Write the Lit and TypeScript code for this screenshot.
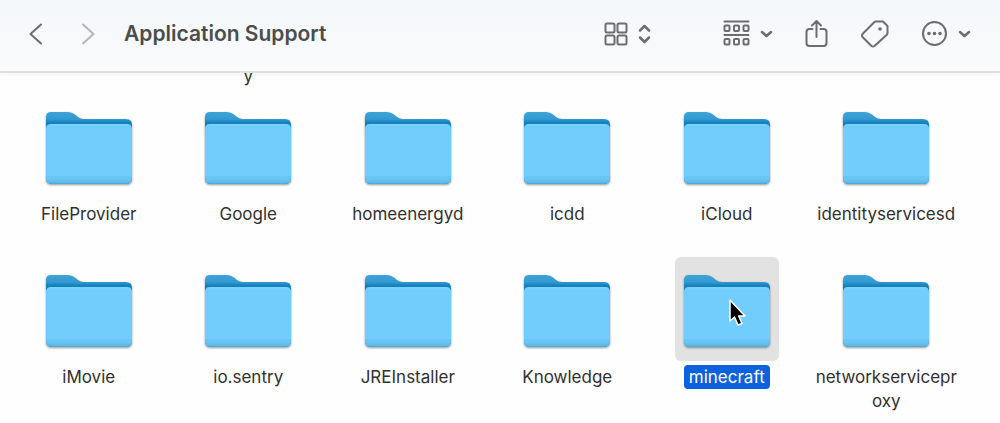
import { LitElement, html, css, svg, nothing } from "lit";
import { customElement, property, state } from "lit/decorators.js";
import { classMap } from "lit/directives/class-map.js";

const chevronDown = svg`<path d="M2 2 L6.500 6 L11 2" />`;

@customElement("folder-icon")
class FolderIcon extends LitElement {
  static styles = css`
    :host { display: block; }
    .folder { display: block; width: 90px; height: 84px; }
  `;

  render() {
    return html`
      <svg class="folder" viewBox="0 -7 90 84" aria-hidden="true">
        <defs>
          <linearGradient id="back" x1="0" y1="0" x2="0" y2="1">
            <stop offset="0" stop-color="#3fa3d8" />
            <stop offset="0.1" stop-color="#3399d0" />
            <stop offset="0.15" stop-color="#1480bd" />
            <stop offset="1" stop-color="#1480bd" />
          </linearGradient>
          <linearGradient id="front" x1="0" y1="0" x2="0" y2="1">
            <stop offset="0" stop-color="#7fd4fb" />
            <stop offset="0.04" stop-color="#71cdfb" />
            <stop offset="0.87" stop-color="#71cdfb" />
            <stop offset="0.88" stop-color="#64c0ef" />
            <stop offset="0.9" stop-color="#6cc8f7" />
            <stop offset="0.96" stop-color="#62bceb" />
            <stop offset="1" stop-color="#50a9d6" />
          </linearGradient>
          <filter id="shade" x="-10%" y="-10%" width="120%" height="120%">
            <feDropShadow dx="0" dy="1" stdDeviation="0.8" flood-color="#000" flood-opacity="0.4" />
          </filter>
        </defs>
        <g filter="url(#shade)">
          <path fill="url(#back)" d="M2 6 Q2 1 7 1 H24 Q28 1 31 3.500 L34 6 Q36.500 8 40 8 H82 Q88 8 88 14 V67 Q88 73 82 73 H8 Q2 73 2 67 Z" />
          <path fill="url(#front)" d="M2 18 Q2 13 7 13 H83 Q88 13 88 18 V67 Q88 73 82 73 H8 Q2 73 2 67 Z" />
        </g>
      </svg>
    `;
  }
}

@customElement("file-item")
class FileItem extends LitElement {
  static styles = css`
    :host { display: block; }
    .item {
      display: flex;
      flex-direction: column;
      align-items: center;
      gap: 4px;
      width: 100%;
      padding: 0;
      border: 0;
      background: none;
      font: inherit;
      font-optical-sizing: none;
      color: inherit;
    }
    .tile {
      position: relative;
      display: grid;
      place-items: center;
      width: 104px;
      height: 104px;
      border-radius: 6px;
    }
    .label {
      max-width: 152px;
      padding: 0 5px;
      border-radius: 4px;
      line-height: 24px;
      overflow-wrap: anywhere;
      text-align: center;
    }
    .selected .tile { background: #e2e2e2; }
    .selected .label { background: #0b62de; color: #fff; }
    .pointer { position: absolute; left: 53px; top: 41px; width: 20px; height: 30px; }
  `;

  @property() name = "";
  @property({ type: Boolean }) selected = false;

  render() {
    return html`
      <button class=${classMap({ item: true, selected: this.selected })} aria-pressed=${this.selected}>
        <span class="tile">
          <folder-icon></folder-icon>
          ${this.selected
            ? html`<svg class="pointer" viewBox="0 0 20 30" aria-hidden="true">
                <path d="M2 2 V23 L6.500 19 L10 27 L14 25.500 L10.700 18 H17 Z" fill="#000" stroke="#fff" stroke-width="1.500" stroke-linejoin="round" />
              </svg>`
            : nothing}
        </span>
        <span class="label">${this.name}</span>
      </button>
    `;
  }
}

@customElement("app-root")
class AppRoot extends LitElement {
  static styles = css`
    :host {
      display: flex;
      flex-direction: column;
      height: 100vh;
      overflow: hidden;
      background: #fefefe;
      color: #303030;
      font: 17px Inter, "Liberation Sans", sans-serif;
      font-optical-sizing: none;
    }
    .toolbar {
      display: flex;
      align-items: center;
      flex: none;
      box-sizing: border-box;
      height: 73px;
      padding: 0 29px 4px 28px;
      border-bottom: 2px solid #dfe0e0;
      background: linear-gradient(#f4f8fa, #f9fafa);
      box-shadow: 0 1px 3px rgba(0, 0, 0, 0.06);
    }
    .nav { display: flex; gap: 38px; }
    .tools { display: flex; align-items: center; gap: 32px; margin-left: auto; }
    .tool {
      display: flex;
      align-items: center;
      gap: 10px;
      padding: 0;
      border: 0;
      background: none;
      color: #6b6d6e;
    }
    .view { margin-right: 40px; }
    .off { color: #b3b6b8; }
    svg {
      display: block;
      fill: none;
      stroke: currentColor;
      stroke-width: 2;
      stroke-linecap: round;
      stroke-linejoin: round;
    }
    .dot { fill: currentColor; stroke: none; }
    .bold { stroke-width: 2.5; }
    h1 { margin: 0 0 0 28px; font-size: 21px; line-height: 28px; font-weight: 600; color: #4a4c4d; }
    .files {
      flex: 1;
      min-height: 0;
      overflow: hidden;
      padding: 0 34px 0 9px;
    }
    .row { display: grid; grid-template-columns: repeat(6, 1fr); margin-bottom: 31px; }
    .cut { margin: -9px 0 6px; line-height: 24px; text-align: center; }
    .tail { grid-column: 2; }
  `;

  @state() rows = [
    ["FileProvider", "Google", "homeenergyd", "icdd", "iCloud", "identityservicesd"],
    ["iMovie", "io.sentry", "JREInstaller", "Knowledge", "minecraft", "networkserviceproxy"],
  ];

  render() {
    return html`
      <header class="toolbar">
        <nav class="nav">
          <button class="tool" aria-label="Back">
            <svg width="15" height="22" viewBox="0 0 15 22"><path d="M13 1.500 L2.500 11 L13 20.500" /></svg>
          </button>
          <button class="tool off" aria-label="Forward" disabled>
            <svg width="15" height="22" viewBox="0 0 15 22"><path d="M2 1.500 L12.500 11 L2 20.500" /></svg>
          </button>
        </nav>
        <h1>Application Support</h1>
        <div class="tools">
          <button class="tool view" aria-label="View as icons">
            <svg width="24" height="24" viewBox="0 0 24 24">
              <rect x="1.500" y="1.500" width="9" height="9" rx="1.500" />
              <rect x="13.500" y="1.500" width="9" height="9" rx="1.500" />
              <rect x="1.500" y="13.500" width="9" height="9" rx="1.500" />
              <rect x="13.500" y="13.500" width="9" height="9" rx="1.500" />
            </svg>
            <svg class="bold" width="13" height="20" viewBox="0 0 13 20">
              <path d="M2 6.500 L6.500 2 L11 6.500 M2 13.500 L6.500 18 L11 13.500" />
            </svg>
          </button>
          <button class="tool" aria-label="Group items">
            <svg width="27" height="27" viewBox="0 0 27 27">
              <path d="M1.500 1.500 H25.500 M1.500 15 H25.500" />
              ${[1.5, 11, 20.5].map(
                (x) => svg`
                  <rect x=${x} y="5.500" width="5" height="5.500" rx="1" />
                  <rect x=${x} y="19" width="5" height="5.500" rx="1" />`
              )}
            </svg>
            <svg class="bold" width="13" height="8" viewBox="0 0 13 8">${chevronDown}</svg>
          </button>
          <button class="tool" aria-label="Share">
            <svg width="23" height="29" viewBox="0 0 23 29">
              <path d="M7.500 10 H4.500 Q1.500 10 1.500 13 V24 Q1.500 27 4.500 27 H18.500 Q21.500 27 21.500 24 V13 Q21.500 10 18.500 10 H15.500 M11.500 18 V2 M7 6.500 L11.500 2 L16 6.500" />
            </svg>
          </button>
          <button class="tool" aria-label="Edit tags">
            <svg width="29" height="29" viewBox="0 0 29 29">
              <path d="M15.500 2.500 H23 L27.500 7 V14 Q27.500 15 26.500 16 L14.500 27 Q13 28 11.500 27 L2.500 18 Q1.500 16.500 2.500 15 L14 3.500 Q14.700 2.500 15.500 2.500 Z" />
              <circle class="dot" cx="20" cy="10" r="1.800" />
            </svg>
          </button>
          <button class="tool" aria-label="More actions">
            <svg width="27" height="27" viewBox="0 0 27 27">
              <circle cx="13.500" cy="13.500" r="11.500" />
              <circle class="dot" cx="8" cy="13.500" r="1.800" />
              <circle class="dot" cx="13.500" cy="13.500" r="1.800" />
              <circle class="dot" cx="19" cy="13.500" r="1.800" />
            </svg>
            <svg class="bold" width="13" height="8" viewBox="0 0 13 8">${chevronDown}</svg>
          </button>
        </div>
      </header>
      <main class="files">
        <div class="row cut"><span class="tail">y</span></div>
        ${this.rows.map(
          (row) => html`<div class="row">
            ${row.map((name) => html`<file-item .name=${name} .selected=${name === "minecraft"}></file-item>`)}
          </div>`
        )}
      </main>
    `;
  }
}
